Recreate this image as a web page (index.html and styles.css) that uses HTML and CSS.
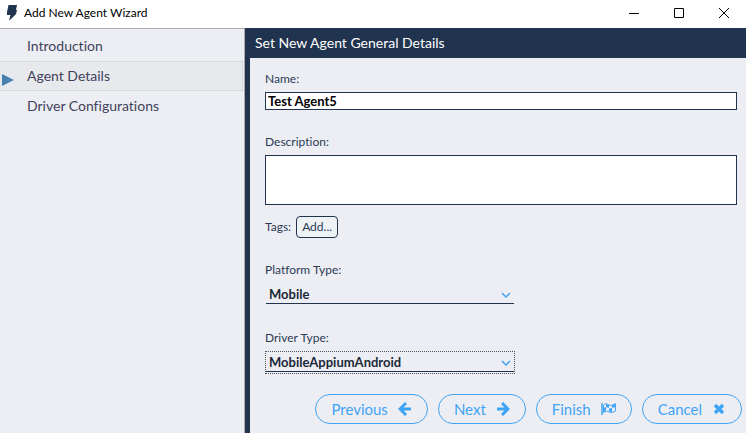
FILE: index.html
```html
<!DOCTYPE html>
<html lang="en">
<head>
<meta charset="utf-8">
<meta name="viewport" content="width=device-width, initial-scale=1">
<title>Add New Agent Wizard</title>
<link rel="stylesheet" href="styles.css">
</head>
<body>
<header class="titlebar">
  <svg class="logo" width="12" height="16" viewBox="0 0 12 16" aria-hidden="true"><path d="M2.500 0H11L10 5H11L10 9L5 14L3 15.500L4.500 10H1V7Z" fill="#21344f"/></svg>
  <span class="window-title">Add New Agent Wizard</span>
  <div class="window-controls">
    <button type="button" aria-label="Minimize"><svg width="10" height="10" viewBox="0 0 10 10"><path d="M0 5.500H10"/></svg></button>
    <button type="button" aria-label="Maximize"><svg width="10" height="10" viewBox="0 0 10 10"><path d="M.5.500H9.500V9.500H.5Z"/></svg></button>
    <button type="button" aria-label="Close"><svg width="10" height="10" viewBox="0 0 10 10"><path d="M0 0L10 10M10 0L0 10"/></svg></button>
  </div>
</header>
<div class="wizard">
  <nav class="steps">
    <a class="step" href="#introduction">Introduction</a>
    <a class="step current" href="#details" aria-current="step">
      <svg class="marker" width="12" height="12" viewBox="0 0 12 12" aria-hidden="true"><path d="M0 0L12 6L0 12Z" fill="#4682b4"/></svg>Agent Details</a>
    <a class="step" href="#configurations">Driver Configurations</a>
  </nav>
  <main class="page">
    <h1>Set New Agent General Details</h1>
    <form class="form">
      <div class="field">
        <label for="name">Name:</label>
        <input id="name" type="text" value="Test Agent5">
      </div>
      <div class="field">
        <label for="description">Description:</label>
        <textarea id="description"></textarea>
      </div>
      <div class="tags">
        <span>Tags:</span>
        <button type="button">Add...</button>
      </div>
      <div class="field">
        <label for="platform">Platform Type:</label>
        <div class="combo">
          <select id="platform"><option>Mobile</option></select>
          <svg width="10" height="6" viewBox="0 0 10 6" aria-hidden="true"><path d="M1 1L5 5L9 1"/></svg>
        </div>
      </div>
      <div class="field">
        <label for="driver">Driver Type:</label>
        <div class="combo focused">
          <select id="driver"><option>MobileAppiumAndroid</option></select>
          <svg width="10" height="6" viewBox="0 0 10 6" aria-hidden="true"><path d="M1 1L5 5L9 1"/></svg>
        </div>
      </div>
    </form>
    <footer class="actions">
      <button type="button">Previous
        <svg width="14" height="14" viewBox="0 0 14 14" aria-hidden="true"><path d="M8 1L2 7L8 13M2 7H13" fill="none" stroke="currentColor" stroke-width="3"/></svg>
      </button>
      <button type="button">Next
        <svg width="14" height="14" viewBox="0 0 14 14" aria-hidden="true"><path d="M6 1L12 7L6 13M12 7H1" fill="none" stroke="currentColor" stroke-width="3"/></svg>
      </button>
      <button type="button">Finish
        <svg width="15" height="14" viewBox="0 0 15 14" aria-hidden="true"><path d="M1 1V13" fill="none" stroke="currentColor" stroke-width="1.500"/><path d="M2.500 3C5 1 6.500 2 8 3C10 4 12 3 14.500 1.500V9C12 10.500 10 11 8 10C6 9 5 9 2.500 10.500Z" fill="none" stroke="currentColor"/><path d="M5 2L8 3V6L5 5ZM11 3.500L14 2V5L11 6ZM2.500 6L5 5V8.500L2.500 9.500ZM8 6.500L11 6V10L8 9.500Z" fill="currentColor"/></svg>
      </button>
      <button type="button">Cancel
        <svg width="14" height="14" viewBox="0 0 14 14" aria-hidden="true"><path d="M3 3L11 11M11 3L3 11" fill="none" stroke="currentColor" stroke-width="3.500"/></svg>
      </button>
    </footer>
  </main>
</div>
</body>
</html>
```
FILE: styles.css
```css
* { box-sizing: border-box; }

body {
  margin: 0;
  min-height: 100vh;
  display: flex;
  flex-direction: column;
  background: #edeef4;
  color: #2b3a55;
  font-family: Lato, "Open Sans", sans-serif;
  font-size: 12px;
  font-variant-ligatures: none;
  line-height: 20px;
}

button, input, select, textarea { font: inherit; color: inherit; }

.titlebar {
  height: 28px;
  display: flex;
  align-items: center;
  padding-left: 6px;
  padding-bottom: 3px;
  background: #fff;
  color: #000;
}

.window-title { margin-left: 6px; }

.window-controls {
  display: flex;
  margin-left: auto;
}

.window-controls button {
  width: 45px;
  height: 25px;
  padding: 0;
  border: 0;
  background: none;
}

.window-controls svg {
  display: block;
  margin: 0 auto;
  fill: none;
  stroke: #000;
}

.wizard { flex: 1; display: flex; }

.steps {
  flex: 0 0 245px;
  padding: 2px 1px 0 0;
  border-top: 1px solid #a9aab0;
  border-right: 1px solid #a9aab0;
}

.step {
  position: relative;
  display: block;
  height: 30px;
  padding-left: 27px;
  border: 1px solid transparent;
  border-left: 0;
  color: #41425c;
  font-size: 14px;
  line-height: 28px;
  text-decoration: none;
}

.step.current { background: #e8e9ed; border-color: #d9dade; }

.marker { position: absolute; left: 2px; top: 12px; }

.page {
  flex: 1;
  display: flex;
  flex-direction: column;
  border-left: 5px solid #21344f;
}

h1 {
  margin: 0;
  padding: 0 5px;
  background: #21344f;
  color: #fff;
  font-size: 14px;
  font-weight: 400;
  line-height: 30px;
}

.form {
  display: flex;
  flex-direction: column;
  gap: 22px;
  padding: 11px 9px 0 15px;
}

.field { display: flex; flex-direction: column; gap: 3px; }

input {
  width: 100%;
  height: 18px;
  padding: 0 2px;
  border: 1px solid #21344f;
  background: #fff;
  color: #000;
  font-size: 13px;
  font-weight: 700;
}

textarea {
  display: block;
  width: 100%;
  height: 50px;
  border: 1px solid #21344f;
  background: #fff;
  resize: none;
}

.tags {
  display: flex;
  align-items: center;
  gap: 5px;
  margin-top: -11px;
}

.tags button {
  height: 22px;
  padding: 0 5px;
  border: 1px solid #21344f;
  border-radius: 4px;
  background: #edf2f5;
  line-height: 18px;
}

.combo {
  position: relative;
  width: 250px;
  max-width: 100%;
  padding-bottom: 1px;
  border: 1px dotted transparent;
}

.combo.focused { border-color: #50535c; }

.combo select {
  display: block;
  width: 100%;
  height: 20px;
  padding: 2px 3px 0;
  border: 0;
  border-bottom: 1px solid #21344f;
  border-radius: 0;
  background: transparent;
  color: #1b2838;
  font-size: 13px;
  font-weight: 700;
  line-height: 17px;
  appearance: none;
  outline: 0;
}

.combo svg {
  position: absolute;
  right: 3px;
  top: 8px;
  fill: none;
  stroke: #3fa4f5;
  stroke-width: 1.500;
  pointer-events: none;
}

.actions {
  display: flex;
  justify-content: flex-end;
  gap: 10px;
  margin-top: auto;
  padding: 20px 4px 9px;
}

.actions button {
  display: flex;
  align-items: center;
  gap: 10px;
  height: 30px;
  padding: 0 15px;
  border: 1px solid #3fa4f5;
  border-radius: 15px;
  background: transparent;
  color: #3fa4f5;
  font-size: 15px;
}
```
